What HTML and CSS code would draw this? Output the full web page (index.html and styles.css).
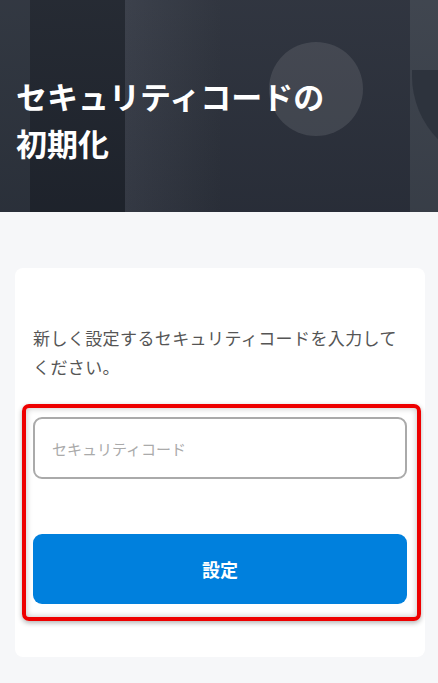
FILE: index.html
```html
<!DOCTYPE html>
<html lang="ja">
<head>
    <meta charset="UTF-8">
    <meta name="viewport" content="width=device-width, initial-scale=1.0">
    <title>セキュリティコードの初期化</title>
    <link rel="stylesheet" href="styles.css">
</head>
<body>

    <header class="hero">
        <div class="hero-circle"></div>
        <h1 class="hero-title">セキュリティコードの<br>初期化</h1>
    </header>

    <main class="page">
        <section class="card">
            <p class="lead">新しく設定するセキュリティコードを入力してください。</p>

            <div class="highlight">
                <input class="code-input" type="text" placeholder="セキュリティコード">
                <button class="submit-btn" type="button">設定</button>
            </div>
        </section>
    </main>

</body>
</html>
```

FILE: styles.css
```css
body {
    font-family: "Noto Sans CJK JP", "Noto Sans", sans-serif;
    margin: 0;
    background-color: #f6f7f9;
    color: #333;
}
.hero {
    position: relative;
    overflow: hidden;
    height: 212px;
    background-color: #272c36;
    background-image:
        linear-gradient(180deg, rgba(255,255,255,0.03), rgba(0,0,0,0.04) 100%),
        linear-gradient(90deg,
            #2c323c 0, #2c323c 30px,
            #1f242d 30px, #1f242d 125px,
            #363b46 125px, #2b303a 220px,
            #2a2f3a 220px, #2a2f3a 410px,
            #3a404a 410px, #3a404a 100%);
}
.hero-circle {
    position: absolute;
    left: 269px;
    top: 42px;
    width: 94px;
    height: 94px;
    border-radius: 50%;
    background-color: rgba(255,255,255,0.1);
}
.hero::after {
    content: '';
    position: absolute;
    left: 412px;
    top: 70px;
    width: 180px;
    height: 96px;
    border-radius: 0 0 0 90px;
    background-color: #2d333d;
}
.hero-title {
    position: relative;
    margin: 0;
    padding: 72px 0 0 16px;
    font-size: 31px;
    font-weight: 700;
    line-height: 47px;
    color: #fff;
}
.page {
    padding: 56px 13px 25px 15px;
}
.card {
    background-color: #fff;
    border-radius: 8px;
    padding: 55px 18px 36px 18px;
}
.lead {
    margin: 0 0 23px 0;
    font-size: 17px;
    letter-spacing: 0.4px;
    line-height: 29px;
    color: #555;
}
.highlight {
    display: flex;
    flex-direction: column;
    margin: 0 -14px 0 -11px;
    padding: 9px 10px 13px 7px;
    border: 4px solid #ee0000;
    border-radius: 7px;
    box-shadow: 0 2px 5px rgba(0,0,0,0.3), inset 0 0 6px rgba(0,0,0,0.25);
}
.code-input {
    box-sizing: border-box;
    height: 62px;
    padding: 0 17px;
    border: 2px solid #aaa;
    border-radius: 9px;
    font-family: inherit;
    font-size: 15px;
    background: #fff;
}
.code-input::placeholder {
    color: #aaa;
}
.submit-btn {
    margin-top: 55px;
    height: 70px;
    border: none;
    border-radius: 9px;
    background-color: #0080dd;
    color: #fff;
    font-family: inherit;
    font-size: 18px;
    font-weight: 700;
}
```
